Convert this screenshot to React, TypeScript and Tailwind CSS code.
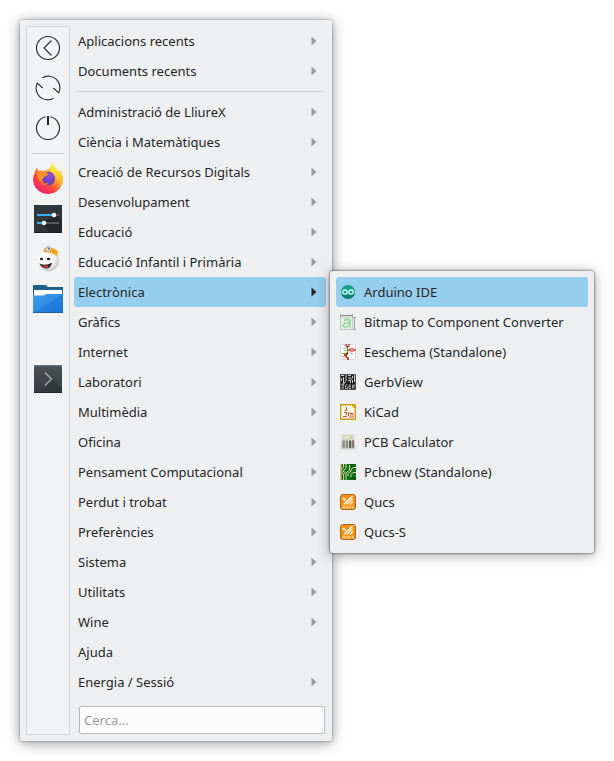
import { useState } from "react";
import type { ReactNode } from "react";

const recents = ["Aplicacions recents", "Documents recents"];

const categories = [
  "Administració de LliureX",
  "Ciència i Matemàtiques",
  "Creació de Recursos Digitals",
  "Desenvolupament",
  "Educació",
  "Educació Infantil i Primària",
  "Electrònica",
  "Gràfics",
  "Internet",
  "Laboratori",
  "Multimèdia",
  "Oficina",
  "Pensament Computacional",
  "Perdut i trobat",
  "Preferències",
  "Sistema",
  "Utilitats",
  "Wine",
  "Ajuda",
  "Energia / Sessió",
];

function LeaveIcon() {
  return (
    <svg width="26" height="26" viewBox="0 0 26 26" fill="none" stroke="#232629" strokeWidth="1.1">
      <circle cx="13" cy="13" r="11.5" />
      <path d="M16.500 5.500L9 13l7.500 7.500" />
    </svg>
  );
}

function RestartIcon() {
  return (
    <svg width="26" height="26" viewBox="0 0 26 26" fill="none" stroke="#232629" strokeWidth="1.1">
      <path d="M7.300 2.900A11.500 11.500 0 0 1 23.700 17.800L18.300 13" />
      <path d="M18.700 23.100A11.500 11.500 0 0 1 2.300 8.200L7.700 13" />
    </svg>
  );
}

function ShutdownIcon() {
  return (
    <svg width="26" height="26" viewBox="0 0 26 26" fill="none" stroke="#232629" strokeWidth="1.1">
      <path d="M15.300 1.800a11.500 11.500 0 1 1-4.600 0" />
      <path d="M13 1v9" strokeWidth="2" />
    </svg>
  );
}

function FirefoxIcon() {
  return (
    <svg width="32" height="32" viewBox="0 0 32 32">
      <defs>
        <linearGradient id="fox" x1="0.85" y1="0.1" x2="0.2" y2="0.95">
          <stop offset="0" stopColor="#fff04a" />
          <stop offset="0.35" stopColor="#ffa52a" />
          <stop offset="0.65" stopColor="#ff4b3f" />
          <stop offset="1" stopColor="#e91f74" />
        </linearGradient>
        <linearGradient id="foxTail" x1="0" y1="0" x2="0" y2="1">
          <stop offset="0" stopColor="#fff04f" />
          <stop offset="0.6" stopColor="#ffc22e" />
          <stop offset="1" stopColor="#ff9a2a" stopOpacity="0" />
        </linearGradient>
        <radialGradient id="globe" cx="0.6" cy="0.3" r="0.7">
          <stop offset="0" stopColor="#9a45dd" />
          <stop offset="1" stopColor="#5146b8" />
        </radialGradient>
      </defs>
      <path
        d="M20 .5c1.600 3 5 4.600 6.400 8.600.5-.7.7-1.500.7-2.300 2.800 2.600 4 6.600 3.900 10.200A15 15 0 0 1 16 31 15 15 0 0 1 1 17.300c-.1-2.800.6-5.300 1.900-7.300 0-1.700.6-3.800 2.300-5.200.1 1.300.5 2.200 1.100 2.800 2.200-.4 4.300.1 5.700.7 1.900-1.700 3.600-1.600 4.300-1.600C17.300 5 19.500 3.500 20 .5z"
        fill="url(#fox)"
      />
      <path
        d="M20 .5c1.600 3 5 4.600 6.400 8.600.5-.7.7-1.500.7-2.300 3.200 3 4.200 7.800 3.600 11.700-1.200 4-4 6.500-6.700 7.500 2.500-4 2.500-8-.5-11.500C20 11.500 15.500 6.500 20 .5z"
        fill="url(#foxTail)"
      />
      <ellipse cx="16.8" cy="15.5" rx="6.2" ry="6.8" fill="url(#globe)" />
      <path d="M5 9c2.500-1.500 5-.6 6.500.8 2 .1 4 .2 5 .8-.4 2.200-3.500 2.400-4.500 4.200-2.500.3-2.500 3-1 5.200-4-1.500-6.500-6.500-6-11z" fill="#ff9026" />
      <path d="M9 17.500c1.500 3 4.500 3.300 8 1.800-1.500 3.200-6 3.700-8.500.7z" fill="#ff7030" />
    </svg>
  );
}

function SettingsIcon() {
  return (
    <svg width="28" height="28" viewBox="0 0 28 28">
      <path d="M0 0h28v28H0z" fill="#31363b" />
      <path d="M8 18l15-8 5 5v13H16z" fill="#24282c" />
      <path d="M0 27h28v1H0z" fill="#1a1d20" />
      <path d="M3 10h17M3 18h7" stroke="#3daee9" strokeWidth="2" />
      <path d="M20 10h5M10 18h15" stroke="#565b60" strokeWidth="2" />
      <circle cx="20" cy="10" r="2.2" fill="#fff" />
      <circle cx="10" cy="18" r="2.2" fill="#fff" />
    </svg>
  );
}

function FaceIcon() {
  return (
    <svg width="26" height="28" viewBox="0 0 26 28">
      <defs>
        <radialGradient id="face" cx="0.4" cy="0.35" r="0.65">
          <stop offset="0.5" stopColor="#fff" />
          <stop offset="1" stopColor="#c9c9c9" />
        </radialGradient>
      </defs>
      <circle cx="13.5" cy="16" r="10.5" fill="url(#face)" />
      <path d="M9 3.500Q17 1 23 6l-1 5.500Q16 6.500 8.500 7.500z" fill="#f6a728" />
      <circle cx="13.5" cy="4" r="2.6" fill="#eee" stroke="#888" strokeWidth=".6" />
      <path d="M12.500 3l2 .3-1 2" stroke="#333" strokeWidth=".8" fill="none" />
      <ellipse cx="6.5" cy="14" rx="1.6" ry="1.2" fill="#222" />
      <ellipse cx="13.5" cy="14" rx="1.8" ry="1.3" fill="#222" />
      <path d="M4.500 18.500q6.500 2.800 12.500-1-1 6-6 6-4.500-.5-6.500-5z" fill="#222" />
      <path d="M7.500 21.500q4-1.800 6.500-.5-1.500 2-3.500 2-2-.3-3-1.500z" fill="#ee2f3b" />
    </svg>
  );
}

function FolderIcon() {
  return (
    <svg width="30" height="28" viewBox="0 0 30 28">
      <defs>
        <linearGradient id="folder" x1="0" y1="0" x2="1" y2="1">
          <stop offset="0" stopColor="#3d9ee9" />
          <stop offset="0.5" stopColor="#2f8fe5" />
          <stop offset="0.5" stopColor="#2282df" />
          <stop offset="1" stopColor="#1b74d8" />
        </linearGradient>
      </defs>
      <path d="M0 0h13l2 2h15v12H0z" fill="#1f608e" />
      <path d="M1 5h28v8H1z" fill="#fff" />
      <path d="M0 10.500h11l2-1.500h17v19H0z" fill="url(#folder)" />
      <path d="M0 27h30v1H0z" fill="#185fb0" />
    </svg>
  );
}

function TerminalIcon() {
  return (
    <svg width="28" height="28" viewBox="0 0 28 28">
      <defs>
        <linearGradient id="term" x1="0" y1="0" x2="0" y2="1">
          <stop offset="0" stopColor="#495456" />
          <stop offset="1" stopColor="#343b40" />
        </linearGradient>
      </defs>
      <path d="M0 0h28v28H0z" fill="url(#term)" />
      <path d="M12 21l6-6.500L28 24v4H18z" fill="#2d3236" opacity=".6" />
      <path d="M0 .5h28" stroke="#6a7577" />
      <path d="M0 27h28v1H0z" fill="#23272b" />
      <path d="M11 7.500l6.500 6.500-6.500 6.500" fill="none" stroke="#9fa5a6" strokeWidth="1.6" />
    </svg>
  );
}

function ArduinoIcon() {
  return (
    <svg width="16" height="16" viewBox="0 0 16 16">
      <circle cx="8" cy="8" r="7" fill="#16a08c" />
      <path d="M1.500 10.500a7 7 0 0 0 13 0z" fill="#128070" />
      <circle cx="5" cy="8" r="2.2" fill="none" stroke="#e8fbf8" strokeWidth="1.2" />
      <circle cx="11" cy="8" r="2.2" fill="none" stroke="#e8fbf8" strokeWidth="1.2" />
    </svg>
  );
}

function BitmapIcon() {
  return (
    <svg width="16" height="16" viewBox="0 0 16 16">
      <path d="M.5 3h12v12.500H.5z" fill="#e6efe6" stroke="#c3c9c4" />
      <path d="M0 1.500h13" stroke="#858b8b" />
      <path d="M.5 0v3M12.500 0v3M14.500 3v12" stroke="#9da3a3" />
      <path d="M13 3.500h3M13 15.500h3" stroke="#a5abab" />
      <path
        d="M4 6.500l3-1.500 3 1V13.500M9 8.500l-4 .5-2 2.500 2 2 4-2"
        stroke="#85d490"
        strokeWidth="1.8"
        strokeDasharray="2.500 .6"
        fill="none"
      />
    </svg>
  );
}

function EeschemaIcon() {
  return (
    <svg width="16" height="16" viewBox="0 0 16 16">
      <rect x=".5" y=".5" width="15" height="15" rx="1" fill="#fafafa" stroke="#d8d8d8" />
      <path d="M7.500 3v8M1.500 9.500h5" stroke="#46c234" strokeWidth="1.2" />
      <path d="M6 0v2l1.500 1L9 2V0" stroke="#b51515" strokeWidth="1.2" fill="none" />
      <path d="M3 5l3-1M4 6.500h3M10 9l3 1M2 13h3" stroke="#a9a9a9" />
      <rect x="9.5" y="5" width="4.5" height="2" rx=".5" fill="#fff" stroke="#b51515" />
      <path d="M7.500 6H9.500M14 6h2" stroke="#b51515" />
      <path d="M8 8.500L6 10v2.500L8 14v2M4 11h2" stroke="#b51515" strokeWidth="1.5" fill="none" />
    </svg>
  );
}

function GerbViewIcon() {
  return (
    <svg width="16" height="16" viewBox="0 0 16 16">
      <rect width="16" height="16" rx="1" fill="#1d1d1d" />
      <path
        d="M1 1.500h3M1.500 4v3M3.500 3v6L1 11.500M6 1v6l-3 4v4M8 1.500h3M8 4h3M8 6.500h2M12.500 2v2l-2 2v3M14.500 1v7M12.500 6v3M1 14h1"
        stroke="#dedede"
        strokeWidth=".9"
        fill="none"
      />
      <path
        d="M7.500 11H5.500v3.500h2V13M11 11H9v3.500h2M9 12.700h2M12.500 14.500V11h2l-.5 1.700h-1l1.500 1.800"
        stroke="#c4c4c4"
        strokeWidth=".8"
        fill="none"
      />
      <rect x=".5" y=".5" width="15" height="15" rx="1" fill="none" stroke="#6b6b6b" strokeWidth=".7" />
    </svg>
  );
}

function KiCadIcon() {
  return (
    <svg width="16" height="16" viewBox="0 0 16 16">
      <path d="M.7.7h11L15.300 5v10.300H.7z" fill="#fffaf0" stroke="#c99a1c" strokeWidth="1.4" />
      <path d="M10 0h6v6z" fill="#d4a017" />
      <path d="M11 1l4 4" stroke="#f7d35b" />
      <path
        d="M6.500 3v3M4.500 6.500h2M6.500 8v3M4 8.500h2.500M3 12.500h4M8.500 8v4M9.500 9.500h4M10 11h3.500M9 13h5"
        stroke="#c4532c"
        strokeWidth="1.1"
      />
    </svg>
  );
}

function CalculatorIcon() {
  return (
    <svg width="16" height="16" viewBox="0 0 16 16">
      <path d="M2.500 1h11L15 15H1z" fill="#d4d4cf" stroke="#c0c0bb" strokeWidth=".6" />
      <path d="M3 2h10v3H3z" fill="#e0e5c6" />
      <path d="M9.500 3.500H12" stroke="#aeb491" />
      <path d="M2.500 6.500h2.300V14H2.500zM5.700 6.500H8V14H5.700z" fill="#8e8e8a" />
      <path d="M9 6.500h2.300V14H9z" fill="#5f5f5c" />
      <path d="M12.200 6.500h1.800V14h-1.800z" fill="#77716f" />
      <path d="M12.200 6.500h1.800v1.500h-1.800z" fill="#a86058" />
    </svg>
  );
}

function PcbnewIcon() {
  return (
    <svg width="16" height="16" viewBox="0 0 16 16">
      <path d="M0 0h16v16H0z" fill="#12701c" />
      <path d="M.8 0v16" stroke="#d8b98c" strokeWidth="1.6" />
      <path
        d="M3.500 0v3.500L1 6M6 0v4L3.500 6.500V8M9.500 1v5L6 9v7M16 3.500h-3L11 6v1L8 9.500V12M16 8.500h-3L11 10.500V13"
        stroke="#ddd5a0"
        fill="none"
      />
      <path d="M10.500 0h3v2.500h-3zM13 13h3v3h-3z" fill="#0b5213" />
      <circle cx="3.5" cy="8.5" r="1.2" fill="#12701c" stroke="#f1e9bd" strokeWidth=".8" />
      <path d="M3.500 10v6" stroke="#d8b98c" />
    </svg>
  );
}

function QucsIcon() {
  return (
    <svg width="16" height="16" viewBox="0 0 16 16">
      <rect x=".5" y=".5" width="15" height="15" rx="2.5" fill="#f79212" stroke="#a5681c" />
      <path d="M4 10.500l8.500-8.500" stroke="#fff" strokeWidth="1.4" />
      <path d="M2.500 4l4 3M7 10l5.500-5M10 10.500l3-3" stroke="#fff3df" strokeWidth="1.4" />
      <circle cx="4" cy="5" r="1.2" fill="#fff3df" />
      <path
        d="M3 12.300h2v1.800H3zM6.200 12v2.200H8V12M10.600 12.300H9.200v1.800h1.400M13.500 12.300H12v.9h1.300v1h-1.500"
        stroke="#fde3bd"
        strokeWidth=".7"
        fill="none"
      />
    </svg>
  );
}

type Item = { name: string; icon: ReactNode };

const sessionActions: Item[] = [
  { name: "Surt", icon: <LeaveIcon /> },
  { name: "Reinicia", icon: <RestartIcon /> },
  { name: "Atura", icon: <ShutdownIcon /> },
];

const favorites: Item[] = [
  { name: "Firefox", icon: <FirefoxIcon /> },
  { name: "Configuració", icon: <SettingsIcon /> },
  { name: "LliureX", icon: <FaceIcon /> },
  { name: "Fitxers", icon: <FolderIcon /> },
];

const electronics: Item[] = [
  { name: "Arduino IDE", icon: <ArduinoIcon /> },
  { name: "Bitmap to Component Converter", icon: <BitmapIcon /> },
  { name: "Eeschema (Standalone)", icon: <EeschemaIcon /> },
  { name: "GerbView", icon: <GerbViewIcon /> },
  { name: "KiCad", icon: <KiCadIcon /> },
  { name: "PCB Calculator", icon: <CalculatorIcon /> },
  { name: "Pcbnew (Standalone)", icon: <PcbnewIcon /> },
  { name: "Qucs", icon: <QucsIcon /> },
  { name: "Qucs-S", icon: <QucsIcon /> },
];

function SideButton({ name, icon }: Item) {
  return (
    <button type="button" aria-label={name} className="flex h-10 w-full items-center justify-center">
      {icon}
    </button>
  );
}

function MenuRow({ label, active, onClick }: { label: string; active?: boolean; onClick?: () => void }) {
  return (
    <button
      type="button"
      onClick={onClick}
      className={`flex h-[30px] w-full items-center justify-between rounded-[3px] pr-[9px] pl-1 text-left ${
        active ? "bg-[#96ceed]" : ""
      }`}
    >
      {label}
      {label !== "Ajuda" && (
        <svg
          width="6"
          height="10"
          viewBox="0 0 6 10"
          className={active ? "text-[#232629]" : "text-[#9b9d9f]"}
        >
          <path d="M.5.5L5.500 5 .5 9.500z" fill="currentColor" />
        </svg>
      )}
    </button>
  );
}

function Submenu() {
  const [selected, setSelected] = useState("Arduino IDE");

  return (
    <ul className="absolute -top-1.5 left-full z-10 ml-1 w-[264px] rounded-[3px] bg-[#eeeff1] p-1.5 shadow-[0_0_3px_rgba(0,0,0,0.7),0_2px_14px_rgba(0,0,0,0.35)]">
      {electronics.map((app) => (
        <li key={app.name}>
          <button
            type="button"
            onClick={() => setSelected(app.name)}
            className={`flex h-[30px] w-full items-center gap-2 rounded-[3px] px-1 text-left ${
              selected === app.name ? "bg-[#96ceed]" : ""
            }`}
          >
            {app.icon}
            {app.name}
          </button>
        </li>
      ))}
    </ul>
  );
}

export default function App() {
  const [open, setOpen] = useState("Electrònica");
  const [query, setQuery] = useState("");

  return (
    <div className="min-h-screen bg-white p-5 font-['Noto_Sans',sans-serif] text-[13px] leading-5 text-[#232629]">
      <div className="flex w-[312px] gap-1 rounded-[2px] bg-[#eeeff1] p-1.5 shadow-[0_0_3px_rgba(0,0,0,0.4),0_2px_14px_rgba(0,0,0,0.4)]">
        <aside className="w-11 shrink-0 border border-[#d6d8da] bg-[#f2f3f5] px-[5px] pt-px">
          {sessionActions.map((item) => (
            <SideButton key={item.name} {...item} />
          ))}
          <hr className="my-[5px] border-[#d0d2d4]" />
          {favorites.map((item) => (
            <SideButton key={item.name} {...item} />
          ))}
          <div className="mt-10">
            <SideButton name="Terminal" icon={<TerminalIcon />} />
          </div>
        </aside>

        <div className="min-w-0 flex-1">
          <nav>
            {recents.map((label) => (
              <MenuRow key={label} label={label} />
            ))}
            <hr className="mx-[3px] my-[5px] border-[#cdcfd1]" />
            <ul>
              {categories.map((label) => (
                <li key={label} className="relative">
                  <MenuRow label={label} active={open === label} onClick={() => setOpen(label)} />
                  {label === "Electrònica" && open === label && <Submenu />}
                </li>
              ))}
            </ul>
          </nav>
          <div className="pt-[9px] pr-px pb-px pl-[5px]">
            <input
              type="text"
              aria-label="Cerca"
              placeholder="Cerca..."
              value={query}
              onChange={(e) => setQuery(e.target.value)}
              className="block h-7 w-full rounded-[2px] border border-[#b9bbbd] bg-[#fcfcfc] px-1 outline-none placeholder:text-[#96989a]"
            />
          </div>
        </div>
      </div>
    </div>
  );
}
